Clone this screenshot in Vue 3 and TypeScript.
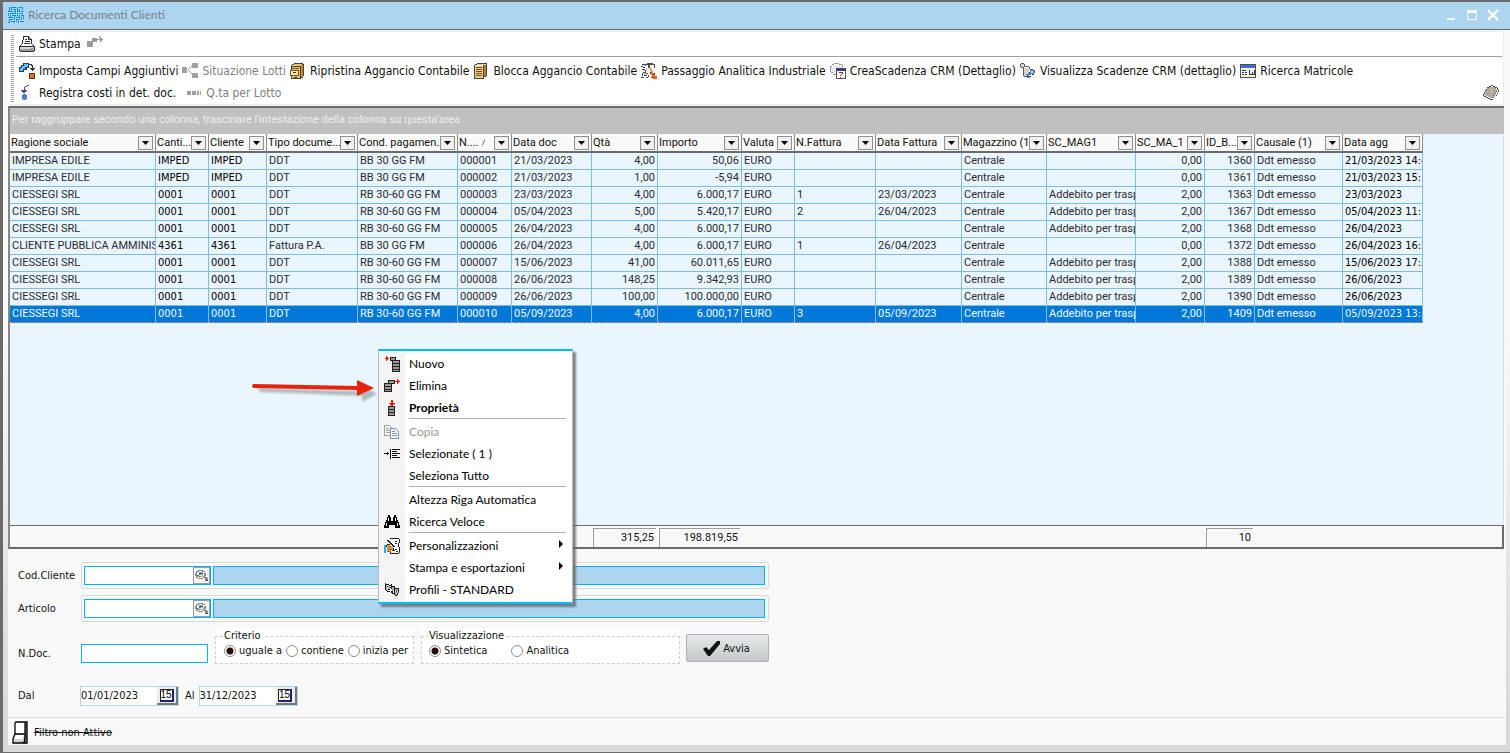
<script setup lang="ts">
import { computed, ref } from 'vue'

type Shape = [fill: string, rects: string]

/* Pixel icons: every shape is a fill and a list of "x y w h" rectangles on a 16x16 board. */
const icons: Record<string, Shape[]> = {
  logo: [['#0a8fe6', '1 0 1 4,3 0 5 1,3 0 1 3,9 0 1 4,11 0 4 1,14 0 1 3,5 2 3 1,11 2 1 3,0 4 6 1,7 3 1 4,9 4 3 1,13 4 3 1,0 6 1 3,2 6 6 1,9 6 1 3,11 6 4 1,2 8 1 2,4 8 4 1,11 8 1 2,13 8 3 1,0 10 5 1,6 9 1 4,8 10 4 1,13 10 1 3,15 9 1 3,1 12 4 1,8 12 4 1,1 12 1 3,3 14 4 1,8 12 1 3,10 14 1 2,12 14 4 1,0 15 2 1,6 14 1 2']],
  print: [
    ['#ffffff', '5 1 6 8,2 9 12 2'],
    ['#d5d5d5', '1 11 14 3'],
    ['#333333', '4 0 6 1,10 1 1 1,11 2 1 1,4 1 1 3,3 4 1 4,12 3 1 5,9 1 1 3,10 3 2 1,2 8 1 1,13 8 1 1,1 9 1 1,14 9 1 1,0 10 1 5,15 10 1 5,1 10 14 1,1 15 14 1,6 3 2 1,6 5 5 1,5 7 6 1'],
    ['#9a9a9a', '1 13 14 2'],
    ['#e56a2a', '12 12 2 1'],
  ],
  move: [['#9c9c9c', '0 5 6 6,5 2 5 4,10 3 5 1,13 1 1 5,14 2 1 3,15 3 1 1,12 0 1 2']],
  fields: [
    ['#1f3f60', '4 0 6 5,2 2 6 5,0 4 5 5'],
    ['#5cc3fa', '5 1 4 3,3 3 3 3,1 5 3 3'],
    ['#333333', '10 1 3 1,12 2 2 1,13 3 1 5,11 5 5 1,12 6 3 1'],
    ['#4a3a36', '10 10 6 6'],
    ['#f26a1e', '11 11 4 4'],
  ],
  tree: [['#a0a0a0', '0 4 5 6,10 0 6 5,10 10 6 5,6 6 1 2,7 5 1 1,8 4 1 1,9 3 1 1,7 8 1 1,8 9 1 1,9 10 1 1']],
  cabinet: [
    ['#4a4038', '4 0 9 1,2 1 2 1,12 1 2 1,1 2 1 13,13 2 1 11,1 15 10 1,11 14 2 1,2 3 9 1,10 3 1 12'],
    ['#efc271', '4 1 8 2,2 4 8 11'],
    ['#c58a3c', '11 2 2 12'],
    ['#7d5424', '0 7 8 1,0 12 8 1,0 7 1 5,8 7 1 6,2 5 7 1'],
    ['#ffe7a3', '1 8 7 4'],
    ['#333333', '3 9 3 1,4 14 3 1'],
  ],
  files: [
    ['#4a4038', '4 0 10 1,2 1 2 1,1 2 1 13,10 2 1 13,13 1 1 12,1 15 10 1,11 13 2 1'],
    ['#f0c982', '2 3 8 12,4 1 9 1'],
    ['#b98239', '11 2 2 11'],
    ['#6a4d2c', '3 4 6 1,3 6 6 1,3 8 6 1,3 10 6 1,3 12 6 1'],
  ],
  tools: [
    ['#4a4a52', '1 1 6 1,6 0 6 2,11 1 3 1,13 2 1 3,0 3 2 1,2 4 2 1,7 2 2 3,1 6 3 1,4 7 1 3,2 9 3 1,1 10 1 3,5 10 2 1,3 12 3 1,0 14 3 1,5 14 2 1,7 12 1 2'],
    ['#bcbcc4', '2 2 4 1,2 7 2 1,3 10 2 2'],
    ['#d79a52', '8 4 2 2,9 6 2 2,10 8 2 2,5 6 1 1'],
    ['#ef6421', '10 10 3 2,11 12 3 2,12 13 4 3'],
    ['#7a2c12', '9 9 1 2,13 10 1 2,10 14 2 1'],
  ],
  calendar: [
    ['#9a9a9a', '4 0 5 1,2 1 2 1,9 1 3 1,0 3 2 1,12 2 1 2,0 4 1 5,1 9 2 1,3 11 3 1'],
    ['#e8e8e8', '3 2 8 2,1 4 12 5,3 9 3 2'],
    ['#3b3f7c', '6 5 10 3'],
    ['#55555d', '6 8 1 8,15 8 1 8,6 15 10 1'],
    ['#ffffff', '7 8 8 7'],
    ['#8b2b2b', '9 9 4 1,12 10 1 1,11 11 1 1,10 12 1 1,10 14 1 1'],
  ],
  deadlines: [
    ['#5a5a5a', '1 0 3 1,0 1 1 3,4 1 1 3,1 4 3 1,3 3 6 1,3 5 1 8,4 13 5 1,9 4 1 2,5 7 3 1,5 9 3 1,10 6 3 1,14 7 1 3'],
    ['#d7d3ca', '1 1 3 3,4 5 5 8'],
    ['#5f88cc', '10 7 4 4,8 10 1 5,6 11 5 1,7 14 3 1'],
    ['#35358c', '9 9 1 2,7 12 1 2,9 13 2 1,12 11 2 1'],
    ['#c9dcff', '11 8 2 2'],
  ],
  serials: [
    ['#4f4f4f', '0 1 16 1,0 2 1 13,15 2 1 13,0 14 16 1'],
    ['#3f6bd2', '1 2 14 3'],
    ['#f2f2f2', '1 5 14 9'],
    ['#3a3a3a', '2 7 4 1,2 9 2 1,5 9 2 1,2 11 2 1,5 11 2 1,9 7 1 4,12 9 1 2,14 7 1 4,9 11 6 1'],
  ],
  cost: [
    ['#4b3f8f', '8 0 2 1,6 1 2 1,5 2 1 3,2 5 6 1,3 6 4 1,4 7 2 1'],
    ['#4c7de0', '4 9 3 1,3 10 5 4,4 14 3 1'],
  ],
  lots: [['#a0a0a0', '1 6 4 4,6 6 4 4,11 6 2 4,14 6 1 4']],
  book: [
    ['#46464a', '8 0 2 1,6 1 2 1,10 1 2 1,4 2 2 1,12 2 2 1,3 4 1 1,2 5 1 1,1 7 1 1,0 9 1 2,14 3 1 2,13 6 1 1,12 8 1 1,11 10 1 1,10 12 1 1,1 11 2 1,3 12 2 1,5 13 2 1,7 14 3 1,15 5 1 2,14 8 1 1,13 10 1 1'],
    ['#a9a6a4', '6 2 6 1,4 3 9 2,3 5 11 1,2 6 11 2,1 8 11 1,1 9 11 1,3 10 8 1,5 11 6 1,7 12 3 1'],
    ['#ececec', '1 10 2 1,3 11 2 1,5 12 2 1,7 13 3 1,11 11 2 1,12 9 2 1,13 7 2 1'],
    ['#f0c14a', '7 4 3 1,9 5 1 1,8 6 1 2,7 9 1 1'],
  ],
  add: [
    ['#e8230c', '1 2 4 1,2 0 1 5,3 1 1 3'],
    ['#222222', '6 1 6 1,6 2 1 2,11 2 1 2,6 4 2 1,8 4 8 1,8 4 1 11,15 4 1 11,9 7 6 1,9 10 6 1,9 13 6 1,8 15 8 1'],
    ['#9a9a9a', '7 2 4 2,9 5 6 2,9 8 6 2,9 11 6 2,9 14 6 1'],
  ],
  remove: [
    ['#222222', '4 2 7 1,4 3 1 2,10 3 1 2,8 5 3 1,0 5 8 1,0 5 1 9,7 5 1 9,1 8 6 1,1 11 6 1,0 13 8 1'],
    ['#9a9a9a', '5 3 5 2,1 6 6 2,1 9 6 2,1 12 6 1'],
    ['#e8230c', '11 3 5 1,13 1 1 5,14 2 1 3'],
  ],
  props: [
    ['#e8230c', '7 0 2 4,5 3 6 1,6 4 4 1,7 5 2 1'],
    ['#222222', '4 6 7 1,4 6 1 10,10 6 1 10,5 9 5 1,5 12 5 1,4 15 7 1'],
    ['#9a9a9a', '5 7 5 2,5 10 5 2,5 13 5 2'],
  ],
  copy: [
    ['#a3a3a3', '0 1 6 1,0 2 1 10,0 11 6 1,6 2 1 1,7 3 1 2,2 4 3 1,2 6 4 1,2 8 4 1'],
    ['#8792b8', '6 4 6 1,6 5 1 10,6 14 9 1,12 5 1 1,13 6 1 1,14 7 1 7,8 7 3 1,8 9 5 1,8 11 5 1'],
  ],
  selected: [['#111111', '0 7 5 1,3 6 1 3,6 3 1 10,8 3 8 1,8 5 5 1,8 7 8 1,8 9 5 1,8 11 8 1']],
  find: [
    ['#000000', '4 1 2 2,10 1 2 2,3 3 4 3,9 3 4 3,2 6 5 3,9 6 5 3,7 7 2 4,1 8 6 3,9 8 6 3,0 11 5 3,11 11 5 3'],
    ['#ffffff', '4 4 1 3,11 4 1 3,2 9 1 3,13 9 1 3'],
  ],
  custom: [
    ['#ffffff', '7 1 8 14'],
    ['#222222', '6 0 9 1,15 1 1 4,14 5 1 4,15 9 1 6,6 15 9 1,6 12 1 3,3 2 2 1,4 3 2 1,5 4 2 1,6 5 2 1,7 6 2 1,8 7 2 1,9 8 2 1,11 3 2 1,11 5 2 1,11 11 2 1,12 13 2 1,3 6 3 1,2 7 1 2,8 12 3 1,9 10 1 2'],
    ['#e79c54', '3 7 4 6,7 8 2 4'],
    ['#14b6f2', '0 7 2 8'],
    ['#b25b1e', '4 9 3 1,4 11 4 1,3 13 4 1'],
  ],
  profiles: [
    ['#1d1d1d', '1 1 1 7,2 8 1 1,3 9 3 1,2 2 3 1,5 3 2 1,7 2 1 5,3 4 1 1,6 5 1 1,4 7 2 1,8 4 3 1,10 5 1 5,7 9 2 2,8 11 2 1,11 6 4 1,14 7 1 4,10 10 1 3,11 13 2 1,13 11 1 2,12 9 1 1'],
    ['#a8a8a8', '2 3 1 5,4 4 2 3,3 7 1 2,8 5 2 4,11 7 3 2,11 10 2 3'],
  ],
  lens: [
    ['#8b8b8b', '4 1 6 1,2 2 3 1,9 2 3 1,1 4 2 4,11 4 2 4,2 8 2 2,4 10 6 1,5 3 4 1,10 8 2 2,12 10 3 3,2 3 1 1'],
    ['#2878c8', '5 4 2 2,3 6 2 2,12 9 2 1'],
    ['#d79058', '8 5 2 3,6 8 3 1'],
    ['#444444', '7 4 3 1,5 7 1 2,13 12 2 1'],
  ],
}

const toPath = (rects: string): string =>
  rects
    .split(',')
    .map((r) => {
      const [x, y, w, h] = r.split(' ')
      return `M${x} ${y}h${w}v${h}h-${w}z`
    })
    .join('')

const paths = Object.fromEntries(
  Object.entries(icons).map(([name, shapes]) => [name, shapes.map(([fill, rects]) => ({ fill, d: toPath(rects) }))]),
)

const toolbar = [
  { icon: 'fields', label: 'Imposta Campi Aggiuntivi' },
  { icon: 'tree', label: 'Situazione Lotti', disabled: true },
  { icon: 'cabinet', label: 'Ripristina Aggancio Contabile' },
  { icon: 'files', label: 'Blocca Aggancio Contabile' },
  { icon: 'tools', label: 'Passaggio Analitica Industriale' },
  { icon: 'calendar', label: 'CreaScadenza CRM (Dettaglio)' },
  { icon: 'deadlines', label: 'Visualizza Scadenze CRM (dettaglio)' },
  { icon: 'serials', label: 'Ricerca Matricole' },
]

interface Column { title: string; width: number; right?: boolean; strong?: boolean; sorted?: boolean; total?: string }
const columns: Column[] = [
  { title: 'Ragione sociale', width: 146 },
  { title: 'Canti...', width: 53, strong: true },
  { title: 'Cliente', width: 58, strong: true },
  { title: 'Tipo docume...', width: 91 },
  { title: 'Cond. pagamen...', width: 100 },
  { title: 'N....', width: 54, sorted: true },
  { title: 'Data doc', width: 80 },
  { title: 'Qtà', width: 66, right: true, total: '315,25' },
  { title: 'Importo', width: 84, right: true, total: '198.819,55' },
  { title: 'Valuta', width: 53 },
  { title: 'N.Fattura', width: 81 },
  { title: 'Data Fattura', width: 86 },
  { title: 'Magazzino (1)', width: 85 },
  { title: 'SC_MAG1', width: 89 },
  { title: 'SC_MA_1', width: 69, right: true },
  { title: 'ID_B...', width: 50, right: true, total: '10' },
  { title: 'Causale (1)', width: 88 },
  { title: 'Data agg', width: 80, strong: true },
]
const tableWidth = computed(() => columns.reduce((sum, c) => sum + c.width, 0) + 'px')
const totalsTemplate = computed(() => columns.map((c) => c.width + 'px').join(' '))

const ciessegi = (n: string, date: string, qty: string, amount: string, inv: string, invDate: string, id: string, updated: string) => [
  'CIESSEGI SRL', '0001', '0001', 'DDT', 'RB 30-60 GG FM', n, date, qty, amount, 'EURO', inv, invDate,
  'Centrale', 'Addebito per trasp', '2,00', id, 'Ddt emesso', updated,
]
const rows = [
  ['IMPRESA EDILE', 'IMPED', 'IMPED', 'DDT', 'BB 30 GG FM', '000001', '21/03/2023', '4,00', '50,06', 'EURO', '', '', 'Centrale', '', '0,00', '1360', 'Ddt emesso', '21/03/2023 14:4'],
  ['IMPRESA EDILE', 'IMPED', 'IMPED', 'DDT', 'BB 30 GG FM', '000002', '21/03/2023', '1,00', '-5,94', 'EURO', '', '', 'Centrale', '', '0,00', '1361', 'Ddt emesso', '21/03/2023 15:'],
  ciessegi('000003', '23/03/2023', '4,00', '6.000,17', '1', '23/03/2023', '1363', '23/03/2023'),
  ciessegi('000004', '05/04/2023', '5,00', '5.420,17', '2', '26/04/2023', '1367', '05/04/2023 11:'),
  ciessegi('000005', '26/04/2023', '4,00', '6.000,17', '', '', '1368', '26/04/2023'),
  ['CLIENTE PUBBLICA AMMINIST', '4361', '4361', 'Fattura P.A.', 'BB 30 GG FM', '000006', '26/04/2023', '4,00', '6.000,17', 'EURO', '1', '26/04/2023', 'Centrale', '', '0,00', '1372', 'Ddt emesso', '26/04/2023 16:5'],
  ciessegi('000007', '15/06/2023', '41,00', '60.011,65', '', '', '1388', '15/06/2023 17:2'),
  ciessegi('000008', '26/06/2023', '148,25', '9.342,93', '', '', '1389', '26/06/2023'),
  ciessegi('000009', '26/06/2023', '100,00', '100.000,00', '', '', '1390', '26/06/2023'),
  ciessegi('000010', '05/09/2023', '4,00', '6.000,17', '3', '05/09/2023', '1409', '05/09/2023 13:'),
]
const selectedRow = ref(9)

interface MenuItem { label: string; icon?: string; bold?: boolean; disabled?: boolean; more?: boolean; line?: boolean }
const menu: MenuItem[] = [
  { label: 'Nuovo', icon: 'add' },
  { label: 'Elimina', icon: 'remove' },
  { label: 'Proprietà', icon: 'props', bold: true, line: true },
  { label: 'Copia', icon: 'copy', disabled: true },
  { label: 'Selezionate ( 1 )', icon: 'selected' },
  { label: 'Seleziona Tutto', line: true },
  { label: 'Altezza Riga Automatica' },
  { label: 'Ricerca Veloce', icon: 'find', line: true },
  { label: 'Personalizzazioni', icon: 'custom', more: true },
  { label: 'Stampa e esportazioni', more: true },
  { label: 'Profili - STANDARD', icon: 'profiles' },
]

const lookups = ref([
  { id: 'cod', label: 'Cod.Cliente', code: '', description: '' },
  { id: 'art', label: 'Articolo', code: '', description: '' },
])
const docNumber = ref('')
const criterion = ref('uguale a')
const view = ref('Sintetica')
const from = ref('01/01/2023')
const to = ref('31/12/2023')
</script>

<template>
  <div class="window">
    <header class="titlebar">
      <svg class="icon" viewBox="0 0 16 16"><path v-for="(p, i) in paths.logo" :key="i" :fill="p.fill" :d="p.d" /></svg>
      <h1>Ricerca Documenti Clienti</h1>
      <div class="winbuttons">
        <button type="button" aria-label="Riduci"><svg viewBox="0 0 12 12"><path d="M2 9h8v2H2z" /></svg></button>
        <button type="button" aria-label="Ingrandisci"><svg viewBox="0 0 12 12"><path fill-rule="evenodd" d="M1 1h10v10H1zM2 4v6h8V4z" /></svg></button>
        <button type="button" aria-label="Chiudi"><svg viewBox="0 0 12 12"><path d="M1 1l10 10M11 1L1 11" class="cross" /></svg></button>
      </div>
    </header>

    <div class="workspace">
      <main class="content">
        <nav class="toolbar">
          <div class="grip"></div>
          <div class="bars">
            <div class="bar first">
              <button type="button" class="tool">
                <svg class="icon" viewBox="0 0 16 16"><path v-for="(p, i) in paths.print" :key="i" :fill="p.fill" :d="p.d" /></svg>Stampa
              </button>
              <button type="button" class="tool" disabled aria-label="Sposta">
                <svg class="icon" viewBox="0 0 16 16"><path v-for="(p, i) in paths.move" :key="i" :fill="p.fill" :d="p.d" /></svg>
              </button>
            </div>
            <div class="bar second">
              <button v-for="t in toolbar" :key="t.label" type="button" class="tool" :disabled="t.disabled">
                <svg class="icon" viewBox="0 0 16 16"><path v-for="(p, i) in paths[t.icon]" :key="i" :fill="p.fill" :d="p.d" /></svg>{{ t.label }}
              </button>
            </div>
            <div class="bar third">
              <button type="button" class="tool">
                <svg class="icon" viewBox="0 0 16 16"><path v-for="(p, i) in paths.cost" :key="i" :fill="p.fill" :d="p.d" /></svg>Registra costi in det. doc.
              </button>
              <button type="button" class="tool" disabled>
                <svg class="icon" viewBox="0 0 16 16"><path v-for="(p, i) in paths.lots" :key="i" :fill="p.fill" :d="p.d" /></svg>Q.ta per Lotto
              </button>
              <button type="button" class="tool help" aria-label="Guida">
                <svg class="icon" viewBox="0 0 16 16"><path v-for="(p, i) in paths.book" :key="i" :fill="p.fill" :d="p.d" /></svg>
              </button>
            </div>
          </div>
        </nav>

        <section class="grid">
          <p class="grouping">Per raggruppare secondo una colonna, trascinare l'intestazione della colonna su questa'area</p>
          <div class="scroll">
            <table :style="{ width: tableWidth }">
              <colgroup><col v-for="c in columns" :key="c.title" :style="{ width: c.width + 'px' }" /></colgroup>
              <thead>
                <tr>
                  <th v-for="c in columns" :key="c.title" scope="col">
                    <div class="head">
                      <span>{{ c.title }}</span>
                      <svg v-if="c.sorted" class="sort" viewBox="0 0 9 8"><path d="M1 7L4 0" stroke="#777" /><path d="M4 0L8 7H1" stroke="#fff" fill="none" /></svg>
                      <button type="button" class="filter" :aria-label="'Filtra ' + c.title"><svg viewBox="0 0 7 4"><path d="M0 0h7L3.5 4z" /></svg></button>
                    </div>
                  </th>
                </tr>
              </thead>
              <tbody>
                <tr v-for="(r, ri) in rows" :key="ri" :class="{ selected: ri === selectedRow }" @click="selectedRow = ri">
                  <td v-for="(cell, ci) in r" :key="ci" :class="{ right: columns[ci].right, strong: columns[ci].strong }">{{ cell }}</td>
                </tr>
              </tbody>
            </table>
          </div>
          <div class="totals" :style="{ gridTemplateColumns: totalsTemplate }">
            <span v-for="c in columns" :key="c.title" :class="{ total: c.total }">{{ c.total }}</span>
          </div>
        </section>

        <form class="form" @submit.prevent>
          <div v-for="l in lookups" :key="l.id" class="line">
            <label :for="l.id">{{ l.label }}</label>
            <div class="lookup">
              <div class="code">
                <input :id="l.id" v-model="l.code" type="text" />
                <button type="button" :aria-label="'Cerca ' + l.label"><svg class="icon" viewBox="0 0 16 14"><path v-for="(p, i) in paths.lens" :key="i" :fill="p.fill" :d="p.d" /></svg></button>
              </div>
              <input v-model="l.description" type="text" class="description" readonly :aria-label="'Descrizione ' + l.label" />
            </div>
          </div>

          <div class="line criteria">
            <label for="ndoc">N.Doc.</label>
            <input id="ndoc" v-model="docNumber" type="text" class="ndoc" />
            <div class="box">
              <fieldset>
                <legend>Criterio</legend>
                <label v-for="o in ['uguale a', 'contiene', 'inizia per']" :key="o"><input v-model="criterion" type="radio" name="criterion" :value="o" />{{ o }}</label>
              </fieldset>
            </div>
            <div class="box wide">
              <fieldset>
                <legend>Visualizzazione</legend>
                <label v-for="o in ['Sintetica', 'Analitica']" :key="o"><input v-model="view" type="radio" name="view" :value="o" />{{ o }}</label>
              </fieldset>
            </div>
            <button type="submit" class="go">
              <svg viewBox="0 0 17 15"><path d="M0 8l3-2 3 3 8-9h3v3L7 15H5z" /></svg>Avvia
            </button>
          </div>

          <div class="line dates">
            <label for="from">Dal</label>
            <div class="date"><input id="from" v-model="from" type="text" /><button type="button" aria-label="Calendario dal"><span>15</span></button></div>
            <label for="to" class="to">Al</label>
            <div class="date"><input id="to" v-model="to" type="text" /><button type="button" aria-label="Calendario al"><span>15</span></button></div>
          </div>
        </form>

        <footer class="status">
          <button type="button">
            <svg viewBox="0 0 17 24"><path d="M3 1h12v21H9z" fill="#777" /><path d="M3 1h10v12H3z" fill="#fff" /><path d="M3 13h10l-1 8H1v-4z" fill="#d4d4d4" /><path d="M3 14h9l-2 4H1z" fill="#fff" /><path d="M3 13V2l1-1h11v21h-3M3 13l-2 5v4h11l1-5V2M3 13h10" fill="none" stroke="#000" stroke-width="1.3" /></svg>
            <s>Filtro non Attivo</s>
          </button>
        </footer>
      </main>
    </div>

    <svg class="pointer" viewBox="0 0 126 26">
      <path class="shade" d="M6 11L110 14V8l15 9-15 8v-6L8 15z" />
      <path d="M0 9q0-2 2-2l103 2V3l17 8-17 8v-6L2 11Q0 11 0 9z" fill="#e8230c" />
    </svg>

    <div class="menu" role="menu">
      <button v-for="m in menu" :key="m.label" type="button" role="menuitem" :class="{ bold: m.bold, line: m.line }" :disabled="m.disabled">
        <span class="gutter"><svg v-if="m.icon" class="icon" viewBox="0 0 16 16"><path v-for="(p, i) in paths[m.icon]" :key="i" :fill="p.fill" :d="p.d" /></svg></span>
        <span class="text">{{ m.label }}</span>
        <svg v-if="m.more" class="more" viewBox="0 0 4 8"><path d="M0 0l4 4-4 4z" /></svg>
      </button>
    </div>
  </div>
</template>

<style>
body { margin: 0; }
</style>

<style scoped>
.window {
  --ui: "DejaVu Sans Condensed", "DejaVu Sans", sans-serif;
  --grid: Roboto, "Noto Sans", sans-serif;
  --segoe: Lato, "Noto Sans", sans-serif;
  --edge: #6b6b6b;
  --accent: #00b4f5;
  --soft: #add5f0;
  position: relative;
  box-sizing: border-box;
  min-height: 100vh;
  display: flex;
  flex-direction: column;
  border: solid var(--edge);
  border-width: 2px 0 1px 3px;
  font: 11px/14px var(--ui);
  color: #111;
  background: #fafafa;
  overflow: hidden;
}
.window * { box-sizing: border-box; }
button, input { font: inherit; color: inherit; padding: 0; margin: 0; border: 0; background: none; border-radius: 0; }
svg { display: block; flex: none; }
.icon { width: 16px; height: 16px; shape-rendering: crispEdges; }

.titlebar { display: flex; align-items: center; gap: 4px; height: 28px; padding: 0 11px 2px 5px; background: var(--soft); border-bottom: 1px solid var(--edge); }
.titlebar h1 { margin: 0; font: 12px/16px var(--segoe); color: #7b7f8c; flex: 1; }
.winbuttons { display: flex; gap: 9px; }
.winbuttons svg { width: 12px; height: 12px; fill: #fff; }
.cross { stroke: #fff; stroke-width: 2.4; }

.workspace { flex: 1; display: flex; padding: 1px 4px 7px 5px; background: linear-gradient(#fafafa 40%, #d9d9d9 95%); }
.content { flex: 1; min-width: 0; display: flex; flex-direction: column; background: #f9f9f9; padding-right: 2px; }

.toolbar { display: flex; padding: 3px 1px 2px 3px; background: #fff; border: solid #ececec; border-width: 1px 1px 1px 0; border-radius: 3px; height: 74px; font-size: 12px; }
.grip { width: 3px; margin-right: 2px; background: repeating-linear-gradient(#a5a5a5 0 1px, #fff 1px 2px); }
.bars { flex: 1; min-width: 0; }
.bar { display: flex; align-items: center; gap: 6px; height: 20px; padding: 0 3px; }
.bar.first { height: 22px; padding-bottom: 3px; border-bottom: 1px solid #a0a0a0; }
.bar.second { gap: 4px; height: 26px; padding-top: 2px; }
.bar.third { gap: 10px; }
.tool { display: flex; align-items: center; gap: 4px; white-space: nowrap; line-height: 16px; }
.tool:disabled { color: #7f7f7f; }
.help { margin-left: auto; }

.grid { flex: 1; display: flex; flex-direction: column; border: solid var(--edge); border-width: 2px 0 2px 2px; border-left-color: #888; margin-top: 1px; background: #eaf6fd; font: 11px/16px var(--grid); }
.grouping { margin: 0; height: 26px; padding: 4px 2px; background: #c0c0c0; color: #e9eef2; }
.scroll { flex: 1; overflow: hidden; border-right: 1px solid #ddd; }
table { table-layout: fixed; border-collapse: separate; border-spacing: 0; }
th { height: 19px; padding: 0; font-weight: normal; text-align: left; background: #fafafa; border: solid #8a8a8a; border-width: 0 1px 2px 0; border-bottom-color: var(--edge); }
.head { display: flex; align-items: center; padding: 0 2px 0 1px; overflow: hidden; white-space: nowrap; line-height: 16px; }
.head span { flex: 1; min-width: 0; overflow: hidden; }
.sort { width: 9px; height: 8px; margin-right: 4px; }
.filter { width: 15px; height: 14px; flex: none; display: grid; place-items: center; background: #f1f1f1; border: 1px solid #8f8f8f; }
.filter svg { width: 7px; height: 4px; }
td { height: 17px; padding: 0 2px; line-height: 16px; overflow: hidden; white-space: nowrap; border: solid #7fbbe8; border-width: 0 1px 1px 0; color: #2b2b33; }
td:first-child { padding-right: 0; }
td.right { text-align: right; }
td.strong { font-family: var(--ui); color: #000; }
.selected td { background: #0078d7; color: #f2f8ff; border-bottom: 1px dotted #e8955a; }
.totals { display: grid; height: 22px; padding: 2px 0 1px; border: solid var(--edge); border-width: 1px 2px 0 0; background: #f9f9f9; line-height: 18px; }
.total { margin: 0 2px 0 1px; padding-right: 2px; text-align: right; border: solid #9c9c9c; border-width: 1px 0 0 1px; }

.form { padding: 13px 10px 11px; }
.line { display: flex; align-items: center; margin-bottom: 6px; }
.line > label:first-child { width: 63px; }
.lookup { display: flex; gap: 2px; padding: 0 3px 0 2px; border: 1px solid #dadada; border-radius: 2px; width: 688px; height: 27px; align-items: center; }
.code { display: flex; width: 127px; height: 19px; border: 1px solid var(--accent); background: #fff; }
.code input { flex: 1; min-width: 0; padding: 0 2px; }
.code button { width: 17px; display: grid; place-items: center; border: 1px solid #9b9b9b; background: #f7f7f7; }
.code .icon { width: 15px; height: 13px; }
.description { flex: 1; height: 19px; border: 1px solid var(--accent); background: var(--soft); padding: 0 2px; }
.criteria { align-items: flex-start; }
.criteria > label, .ndoc { margin-top: 16px; height: 19px; line-height: 19px; }
.ndoc { width: 127px; border: 1px solid var(--accent); background: #fff; padding: 0 2px; }
.box { margin-left: 7px; width: 199px; height: 37px; padding-top: 1px; background: #fff; }
.box.wide { width: 259px; }
fieldset { margin: 0; height: 35px; padding: 0 2px 0 8px; border: 1px dashed #cfcfcf; display: flex; gap: 4px; }
legend { padding: 0 2px 0 0; line-height: 14px; }
fieldset label { display: flex; align-items: center; gap: 3px; white-space: nowrap; height: 16px; }
.wide fieldset { gap: 24px; padding-left: 7px; }
input[type="radio"] { appearance: none; width: 12px; height: 12px; flex: none; border: 1px solid #8d8d8d; border-radius: 50%; background: #fff; }
input[type="radio"]:checked { background: radial-gradient(#2a0508 0 3px, #fff 4px); }
.go { display: flex; align-items: center; justify-content: center; gap: 3px; width: 83px; height: 28px; margin: 6px 0 0 6px; padding: 1px 2px 0 0; border: 1px solid #adb2b5; border-radius: 2px; background: linear-gradient(#e6e9ea, #c6c9cb); }
.go svg { width: 17px; height: 15px; fill: #0a1a10; }
.dates { margin: 21px 0 0; }
.line.dates > label:first-child { width: 62px; }
.date { display: flex; width: 99px; height: 20px; border: 1px solid var(--soft); background: #fff; }
.date input { flex: 1; min-width: 0; height: 16px; }
.date button { width: 21px; display: grid; place-items: center; background: #ececec; border: solid #777; border-width: 0 2px 2px 0; }
.date span { width: 14px; height: 13px; font: 10px/10px "Liberation Sans", Arial, sans-serif; text-align: center; color: #000; border: solid #222; border-width: 1px 2px 2px 1px; border-right-color: #22226a; border-bottom-color: #22226a; background: #fff; }
.to { margin: 0 4px 0 6px; }

.status { height: 28px; border-top: 1px solid #dadada; padding: 3px 4px 0; }
.status button { display: flex; align-items: center; gap: 5px; }
.status svg { width: 17px; height: 24px; }

.pointer { position: absolute; left: 249px; top: 375px; width: 126px; height: 26px; }
.shade { fill: #8c9296; opacity: 0.6; filter: blur(1px); }

.menu { position: absolute; left: 375px; top: 347px; width: 195px; padding: 2px 0 1px; border: solid #b8b8b8; border-width: 2px 1px; border-top-color: #00bdfc; border-bottom-color: #00bdfc; background: linear-gradient(90deg, #f4f4f4 26px, #fff 26px); box-shadow: 3px 3px 2px #666c; font: 12px/20px var(--segoe); color: #000; }
.menu button { display: flex; align-items: center; width: 100%; height: 22px; text-align: left; }
.menu .line { height: 24px; margin: 0; padding-bottom: 2px; background: linear-gradient(#b2b2b2, #b2b2b2) 30px 21px / 157px 1px no-repeat; }
.menu .bold { font-weight: bold; }
.menu button:disabled { color: #999; }
.gutter { width: 30px; padding-left: 5px; }
.text { flex: 1; }
.more { width: 4px; height: 8px; margin: 0 9px 4px 0; }
</style>
